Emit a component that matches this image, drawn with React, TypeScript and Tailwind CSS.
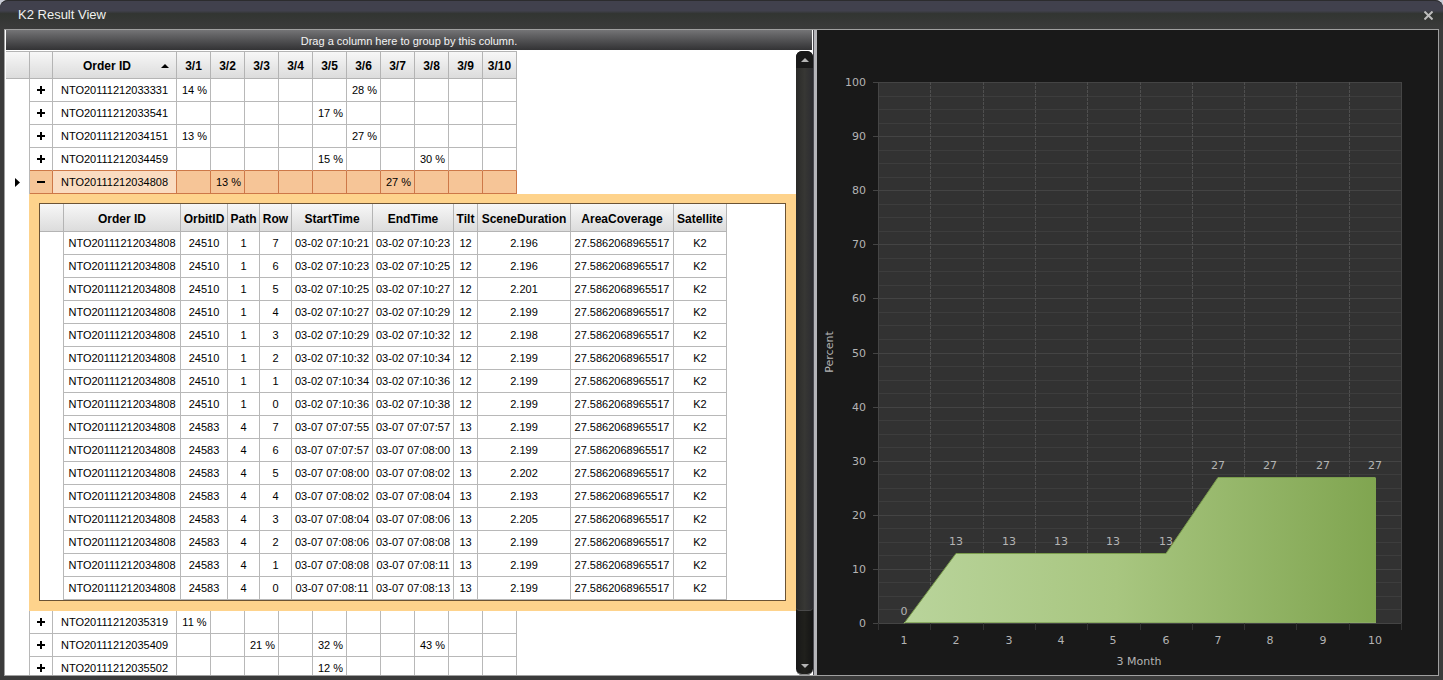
import React, { useState } from 'react';

interface Order {
  id: string;
  cells: Record<number, string>;
}

interface Scene {
  orbit: string;
  path: string;
  row: string;
  start: string;
  end: string;
  tilt: string;
  duration: string;
}

const days = [1, 2, 3, 4, 5, 6, 7, 8, 9, 10];

const orders: Order[] = [
  { id: 'NTO20111212033331', cells: { 1: '14 %', 6: '28 %' } },
  { id: 'NTO20111212033541', cells: { 5: '17 %' } },
  { id: 'NTO20111212034151', cells: { 1: '13 %', 6: '27 %' } },
  { id: 'NTO20111212034459', cells: { 5: '15 %', 8: '30 %' } },
  { id: 'NTO20111212034808', cells: { 2: '13 %', 7: '27 %' } },
  { id: 'NTO20111212035319', cells: { 1: '11 %' } },
  { id: 'NTO20111212035409', cells: { 3: '21 %', 5: '32 %', 8: '43 %' } },
  { id: 'NTO20111212035502', cells: { 5: '12 %' } },
];

const scene = (
  orbit: string,
  path: string,
  row: string,
  start: string,
  end: string,
  tilt: string,
  duration: string
): Scene => ({ orbit, path, row, start, end, tilt, duration });

const scenes: Scene[] = [
  scene('24510', '1', '7', '03-02 07:10:21', '03-02 07:10:23', '12', '2.196'),
  scene('24510', '1', '6', '03-02 07:10:23', '03-02 07:10:25', '12', '2.196'),
  scene('24510', '1', '5', '03-02 07:10:25', '03-02 07:10:27', '12', '2.201'),
  scene('24510', '1', '4', '03-02 07:10:27', '03-02 07:10:29', '12', '2.199'),
  scene('24510', '1', '3', '03-02 07:10:29', '03-02 07:10:32', '12', '2.198'),
  scene('24510', '1', '2', '03-02 07:10:32', '03-02 07:10:34', '12', '2.199'),
  scene('24510', '1', '1', '03-02 07:10:34', '03-02 07:10:36', '12', '2.199'),
  scene('24510', '1', '0', '03-02 07:10:36', '03-02 07:10:38', '12', '2.199'),
  scene('24583', '4', '7', '03-07 07:07:55', '03-07 07:07:57', '13', '2.199'),
  scene('24583', '4', '6', '03-07 07:07:57', '03-07 07:08:00', '13', '2.199'),
  scene('24583', '4', '5', '03-07 07:08:00', '03-07 07:08:02', '13', '2.202'),
  scene('24583', '4', '4', '03-07 07:08:02', '03-07 07:08:04', '13', '2.193'),
  scene('24583', '4', '3', '03-07 07:08:04', '03-07 07:08:06', '13', '2.205'),
  scene('24583', '4', '2', '03-07 07:08:06', '03-07 07:08:08', '13', '2.199'),
  scene('24583', '4', '1', '03-07 07:08:08', '03-07 07:08:11', '13', '2.199'),
  scene('24583', '4', '0', '03-07 07:08:11', '03-07 07:08:13', '13', '2.199'),
];

const sceneColumns = [
  'Order ID',
  'OrbitID',
  'Path',
  'Row',
  'StartTime',
  'EndTime',
  'Tilt',
  'SceneDuration',
  'AreaCoverage',
  'Satellite',
];

const headClass =
  'h-[27px] p-0 pt-0.5 border-r border-b border-[#b4b4b4] bg-linear-to-b from-[#f7f7f7] to-[#dcdcdc] text-xs font-bold whitespace-nowrap';
const cellClass = 'h-[23px] p-0 border-r border-b border-[#b8b8b8]';

function SceneTable({ orderId }: { orderId: string }) {
  return (
    <div className="border border-[#6b5335] bg-white">
      <table className="table-fixed w-[687px] border-separate border-spacing-0 text-center text-[11px] leading-4">
        <colgroup>
          <col className="w-[24px]" />
          <col className="w-[117px]" />
          <col className="w-[47px]" />
          <col className="w-[32px]" />
          <col className="w-[32px]" />
          <col className="w-[81px]" />
          <col className="w-[81px]" />
          <col className="w-[24px]" />
          <col className="w-[93px]" />
          <col className="w-[103px]" />
          <col className="w-[53px]" />
        </colgroup>
        <thead>
          <tr className="h-7">
            <th className={headClass} />
            {sceneColumns.map((name) => (
              <th key={name} className={headClass}>{name}</th>
            ))}
          </tr>
        </thead>
        <tbody>
          {scenes.map((s) => (
            <tr key={s.start}>
              <td className="h-[23px] border-r border-[#b8b8b8] p-0" />
              <td className={cellClass}>{orderId}</td>
              <td className={cellClass}>{s.orbit}</td>
              <td className={cellClass}>{s.path}</td>
              <td className={cellClass}>{s.row}</td>
              <td className={cellClass}>{s.start}</td>
              <td className={cellClass}>{s.end}</td>
              <td className={cellClass}>{s.tilt}</td>
              <td className={cellClass}>{s.duration}</td>
              <td className={cellClass}>27.5862068965517</td>
              <td className={cellClass}>K2</td>
            </tr>
          ))}
        </tbody>
      </table>
    </div>
  );
}

function OrderTable() {
  const [openId, setOpenId] = useState('NTO20111212034808');
  const openIndex = orders.findIndex((o) => o.id === openId);

  return (
    <table className="table-fixed w-full border-separate border-spacing-0 text-center text-[11px] leading-4">
      <colgroup>
        <col className="w-[24px]" />
        <col className="w-[23px]" />
        <col className="w-[124px]" />
        {days.map((d) => (
          <col key={d} className="w-[34px]" />
        ))}
        <col />
      </colgroup>
      <thead>
        <tr className="h-7">
          <th className={`${headClass} border-t`} />
          <th className={`${headClass} border-t`} />
          <th className={`${headClass} border-t`}>
            <div className="flex items-center pr-[7px]">
              <span className="flex-1">Order ID</span>
              <svg width="8" height="4" viewBox="0 0 8 4">
                <path d="M0 4 4 0 8 4z" fill="#000" />
              </svg>
            </div>
          </th>
          {days.map((d) => (
            <th key={d} className={`${headClass} border-t`}>3/{d}</th>
          ))}
          <th className="p-0" />
        </tr>
      </thead>
      <tbody>
        {orders.map((order, i) => {
          const open = i === openIndex;
          let line = 'h-[23px] p-0 border-r border-b border-[#b8b8b8]';
          if (i === openIndex - 1) line = 'h-[23px] p-0 border-r border-b border-[#b8b8b8] border-b-[#cd7848]';
          if (open) line = 'h-[23px] p-0 border-r border-b border-[#cd7848] bg-[#f6c597]';
          return (
            <React.Fragment key={order.id}>
              <tr>
                <td className="h-[23px] border-r border-[#b8b8b8] p-0">
                  {open && (
                    <svg className="ml-[9px]" width="5" height="9" viewBox="0 0 5 9">
                      <path d="M0 0 5 4.5 0 9z" fill="#000" />
                    </svg>
                  )}
                </td>
                <td className={line}>
                  <button
                    type="button"
                    aria-label={open ? `Collapse ${order.id}` : `Expand ${order.id}`}
                    onClick={() => setOpenId(open ? '' : order.id)}
                    className="flex h-full w-full items-center justify-center"
                  >
                    <svg width="8" height="8" viewBox="0 0 8 8">
                      <path d={open ? 'M0 3h8v2H0z' : 'M0 3h3V0h2v3h3v2H5v3H3V5H0z'} fill="#000" />
                    </svg>
                  </button>
                </td>
                <td className={open ? 'h-[23px] p-0 border-r border-b border-[#cd7848] bg-[#fadcc1]' : line}>
                  {order.id}
                </td>
                {days.map((d) => (
                  <td key={d} className={`${line} pl-0.5`}>{order.cells[d]}</td>
                ))}
                <td className="p-0" />
              </tr>
              {open && (
                <tr>
                  <td className="p-0" />
                  <td colSpan={13} className="bg-[#fed38c] p-0">
                    <div className="-ml-px bg-[#fed38c] pt-[9px] pr-[10px] pb-[10px] pl-[10px]">
                      <SceneTable orderId={order.id} />
                    </div>
                  </td>
                </tr>
              )}
            </React.Fragment>
          );
        })}
      </tbody>
    </table>
  );
}

function ScrollBar() {
  return (
    <div className="flex w-[17px] shrink-0 flex-col rounded-md bg-linear-to-r from-[#181818] via-[#20201c] to-[#141414]">
      <button type="button" aria-label="Scroll up" className="flex h-[17px] items-center justify-center rounded-t-md bg-[#191919]">
        <svg width="8" height="4" viewBox="0 0 8 4">
          <path d="M0 4 4 0 8 4z" fill="#b5b5b5" />
        </svg>
      </button>
      <div className="min-h-0 flex-1">
        <div className="h-[92%] rounded-b border-b border-[#4a4a4a] bg-linear-to-r from-[#2a2a28] via-[#373734] to-[#2c2c30]" />
      </div>
      <button type="button" aria-label="Scroll down" className="flex h-[17px] items-center justify-center rounded-b-md border-b border-[#8a8a8a]">
        <svg width="8" height="4" viewBox="0 0 8 4">
          <path d="M0 0 4 4 8 0z" fill="#b5b5b5" />
        </svg>
      </button>
    </div>
  );
}

const percents = [0, 13, 13, 13, 13, 13, 27, 27, 27, 27];
const plot = { left: 61, right: 584, top: 52, bottom: 593 };
const step = (plot.right - plot.left) / percents.length;
const px = (i: number) => Math.round(plot.left + step * (i + 0.5));
const py = (v: number) => Math.round(plot.bottom - (v * (plot.bottom - plot.top)) / 100);

function PercentChart() {
  const top = percents.map((v, i) => `${px(i)},${py(v) + 0.5}`).join(' ');
  const area = `${top} ${px(9) + 1},${py(27) + 0.5} ${px(9) + 1},${plot.bottom} ${px(0)},${plot.bottom}`;

  return (
    <svg
      viewBox="0 0 621 645"
      className="block h-full w-full font-['DejaVu_Sans',Verdana,sans-serif] text-[11px]"
      role="img"
      aria-label="Percent by day, 3 Month"
    >
      <defs>
        <linearGradient id="areaFill" x1="0" x2="1" y1="0" y2="0">
          <stop offset="0" stopColor="#b9d49b" />
          <stop offset="0.45" stopColor="#a8c680" />
          <stop offset="1" stopColor="#80a550" />
        </linearGradient>
      </defs>
      <rect x={plot.left} y={plot.top} width={plot.right - plot.left} height={plot.bottom - plot.top} fill="#323232" />
      {Array.from({ length: 41 }, (_, i) => {
        const y = py(i * 2.5) + 0.5;
        const major = i % 4 === 0;
        return (
          <line
            key={i}
            x1={major ? plot.left - 5 : plot.left}
            x2={plot.right}
            y1={y}
            y2={y}
            stroke={major ? '#444444' : '#3d3d3d'}
          />
        );
      })}
      {Array.from({ length: 11 }, (_, i) => {
        const x = Math.round(plot.left + step * i) + 0.5;
        return (
          <g key={i}>
            <line
              x1={x}
              x2={x}
              y1={plot.top}
              y2={plot.bottom}
              stroke={i === 0 || i === 10 ? '#454545' : '#4f4f4f'}
              strokeDasharray={i === 0 || i === 10 ? undefined : '3 1'}
            />
            <line x1={x} x2={x} y1={plot.bottom} y2={plot.bottom + 7} stroke="#323232" />
          </g>
        );
      })}
      <polygon points={area} fill="url(#areaFill)" />
      <polyline points={top} fill="none" stroke="#7a9d4c" />
      <line x1={px(0)} x2={px(9) + 1} y1={plot.bottom - 0.5} y2={plot.bottom - 0.5} stroke="#8aab62" />
      <g fill="#b4b4b4">
        {Array.from({ length: 11 }, (_, i) => (
          <text key={i} x="49" y={py(i * 10) + 4} textAnchor="end">{i * 10}</text>
        ))}
        {percents.map((v, i) => (
          <React.Fragment key={i}>
            <text x={px(i)} y={py(v) - 8} textAnchor="middle">{v}</text>
            <text x={px(i)} y="614" textAnchor="middle">{i + 1}</text>
          </React.Fragment>
        ))}
        <text x="322" y="635" textAnchor="middle">3 Month</text>
        <text transform="translate(16 322) rotate(-90)" textAnchor="middle">Percent</text>
      </g>
    </svg>
  );
}

export default function App() {
  return (
    <div className="h-screen bg-[#c9ccd6]">
      <div className="flex h-full flex-col rounded-t-lg bg-[#3b3b3b] font-['Liberation_Sans',Arial,sans-serif] text-black">
        <header className="flex h-[29px] shrink-0 items-center justify-between rounded-t-lg border-t border-[#2c2c2e] bg-linear-to-b from-[#41414d] from-35% via-[#323532] via-45% to-[#3b3b3b] pr-2.5 pl-[18px]">
          <h1 className="text-[13px] leading-4 text-[#f0f0f0]">K2 Result View</h1>
          <button type="button" aria-label="Close">
            <svg width="9" height="9" viewBox="0 0 9 9">
              <path d="M0.5 0.5 8.5 8.5M8.5 0.5 0.5 8.5" stroke="#bcbcbc" strokeWidth="2" />
            </svg>
          </button>
        </header>
        <main className="mx-1 mb-1 grid min-h-0 flex-1 grid-cols-[808fr_4px_621fr] grid-rows-[minmax(0,1fr)] border border-[#a0a0a0]">
          <section className="flex min-w-0 flex-col bg-white pl-px">
            <div className="mr-px mb-px flex h-5 shrink-0 items-center justify-center bg-linear-to-b from-[#747476] to-[#333335] pt-0.5 text-[11px] leading-4 text-[#f4f4f4]">
              Drag a column here to group by this column.
            </div>
            <div className="flex min-h-0 flex-1">
              <div className="min-w-0 flex-1 overflow-hidden">
                <OrderTable />
              </div>
              <ScrollBar />
            </div>
          </section>
          <div className="border-l border-[#4a4a50] bg-[#b5b5b9]" />
          <section className="min-w-0 bg-[#191919]">
            <PercentChart />
          </section>
        </main>
      </div>
    </div>
  );
}
